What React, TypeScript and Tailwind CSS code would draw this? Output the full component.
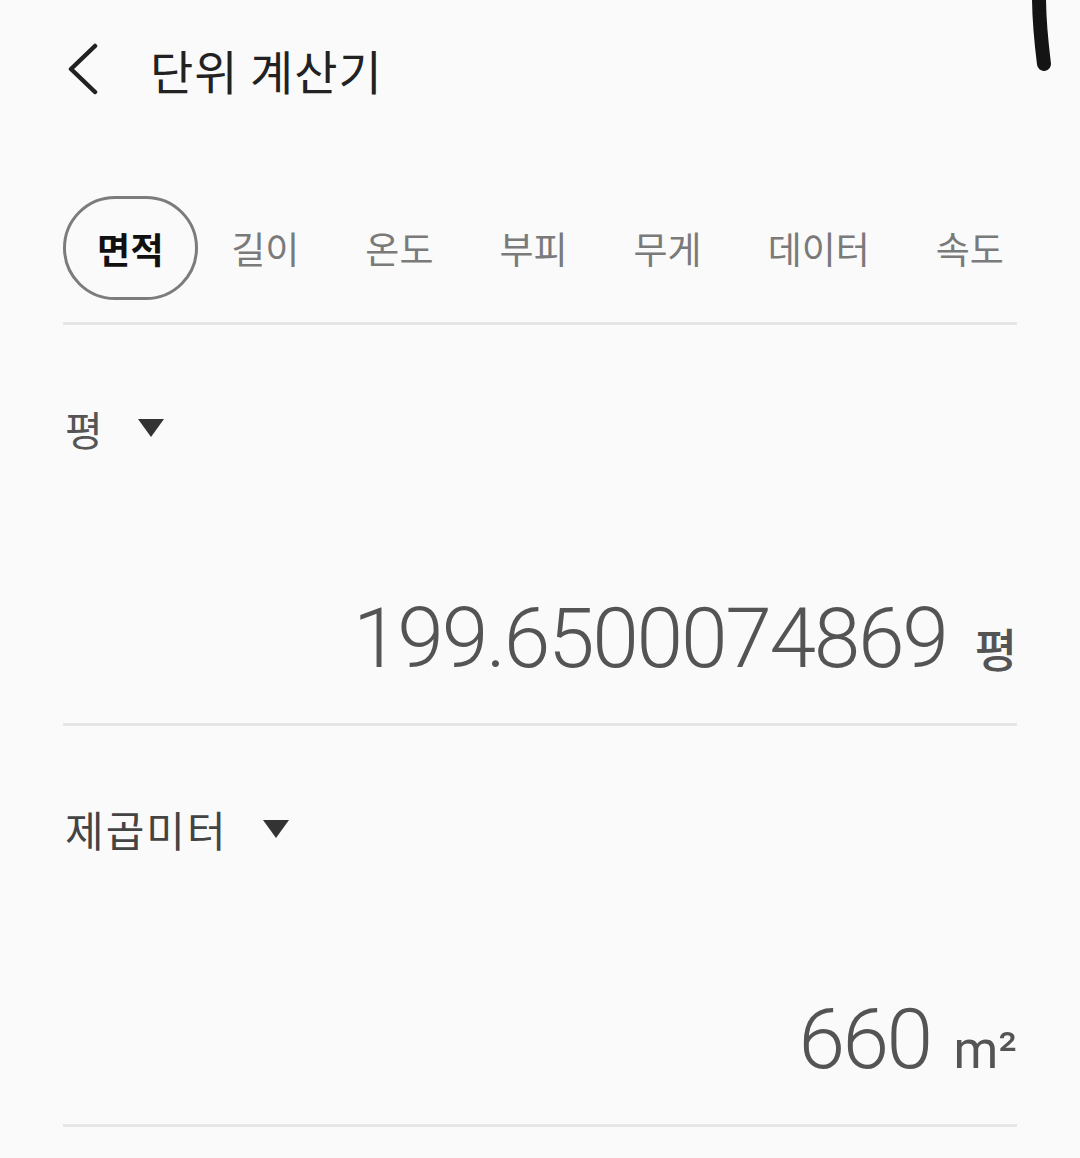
import React from "react";

const KR = "font-['Noto_Sans_CJK_KR','Noto_Sans',sans-serif]";

function Tri() {
  return (
    <svg width="28" height="20" viewBox="0 0 28 20" className="shrink-0">
      <path d="M1 1 L27 1 L14 19 Z" fill="#333" />
    </svg>
  );
}

export default function App() {
  const tabs = ["길이", "온도", "부피", "무게", "데이터", "속도"];
  return (
    <div className={`relative w-[1080px] h-[1158px] bg-[#fafafa] overflow-hidden ${KR}`}>
      <svg className="absolute left-[1028px] top-0" width="30" height="80" viewBox="0 0 30 80">
        <path d="M11 -4 C11 20 13 40 16 64" stroke="#141414" strokeWidth="14" strokeLinecap="round" fill="none" />
      </svg>

      {/* header */}
      <div className="flex items-center h-[140px] pl-[66px] pb-[2px]">
        <svg width="34" height="52" viewBox="0 0 34 52">
          <path d="M29 3 L5 26 L29 49" stroke="#222" strokeWidth="4.5" fill="none" strokeLinecap="round" strokeLinejoin="round" />
        </svg>
        <div className="ml-[50px] text-[47px] leading-none text-[#222] tracking-[1px] whitespace-nowrap">단위 계산기</div>
      </div>

      <div className="px-[63px]">
        {/* tabs */}
        <div className="flex items-center pt-[56px] pb-[22px]">
          <div className="shrink-0 whitespace-nowrap h-[104px] px-[31px] rounded-full border-[3px] border-[#7c7c7c] flex items-center justify-center text-[36px] font-bold text-[#111] leading-none tracking-[0.5px]">
            면적
          </div>
          {tabs.map((t) => (
            <div key={t} className="shrink-0 whitespace-nowrap px-[33px] text-[37px] text-[#7a7a7a] leading-none">
              {t}
            </div>
          ))}
        </div>
        <div className="h-[3px] bg-[#e6e6e6]" />

        {/* section 1 */}
        <div className="flex items-center gap-[34px] h-[210px] pb-[4px] pl-[2px]">
          <span className="text-[41px] text-[#555] leading-none">평</span>
          <Tri />
        </div>
        <div className="flex items-baseline justify-end h-[188px] pt-[62px]">
          <span className="font-['Roboto',sans-serif] font-light text-[84px] text-[#545454] leading-none tracking-[-2.3px]">
            199.6500074869
          </span>
          <span className="ml-[28px] text-[46px] font-medium text-[#545454] leading-none">평</span>
        </div>
        <div className="h-[3px] bg-[#e6e6e6]" />

        {/* section 2 */}
        <div className="flex items-center gap-[34px] h-[210px] pb-[4px] pl-[2px]">
          <span className="text-[42px] text-[#444] leading-none tracking-[2px] whitespace-nowrap">제곱미터</span>
          <Tri />
        </div>
        <div className="flex items-baseline justify-end h-[188px] pt-[62px]">
          <span className="font-['Roboto',sans-serif] font-light text-[84px] text-[#545454] leading-none tracking-[-2.6px]">
            660
          </span>
          <span className="ml-[23px] font-['Roboto',sans-serif] text-[51px] text-[#545454] leading-none">m²</span>
        </div>
        <div className="h-[3px] bg-[#e6e6e6]" />
      </div>
    </div>
  );
}
